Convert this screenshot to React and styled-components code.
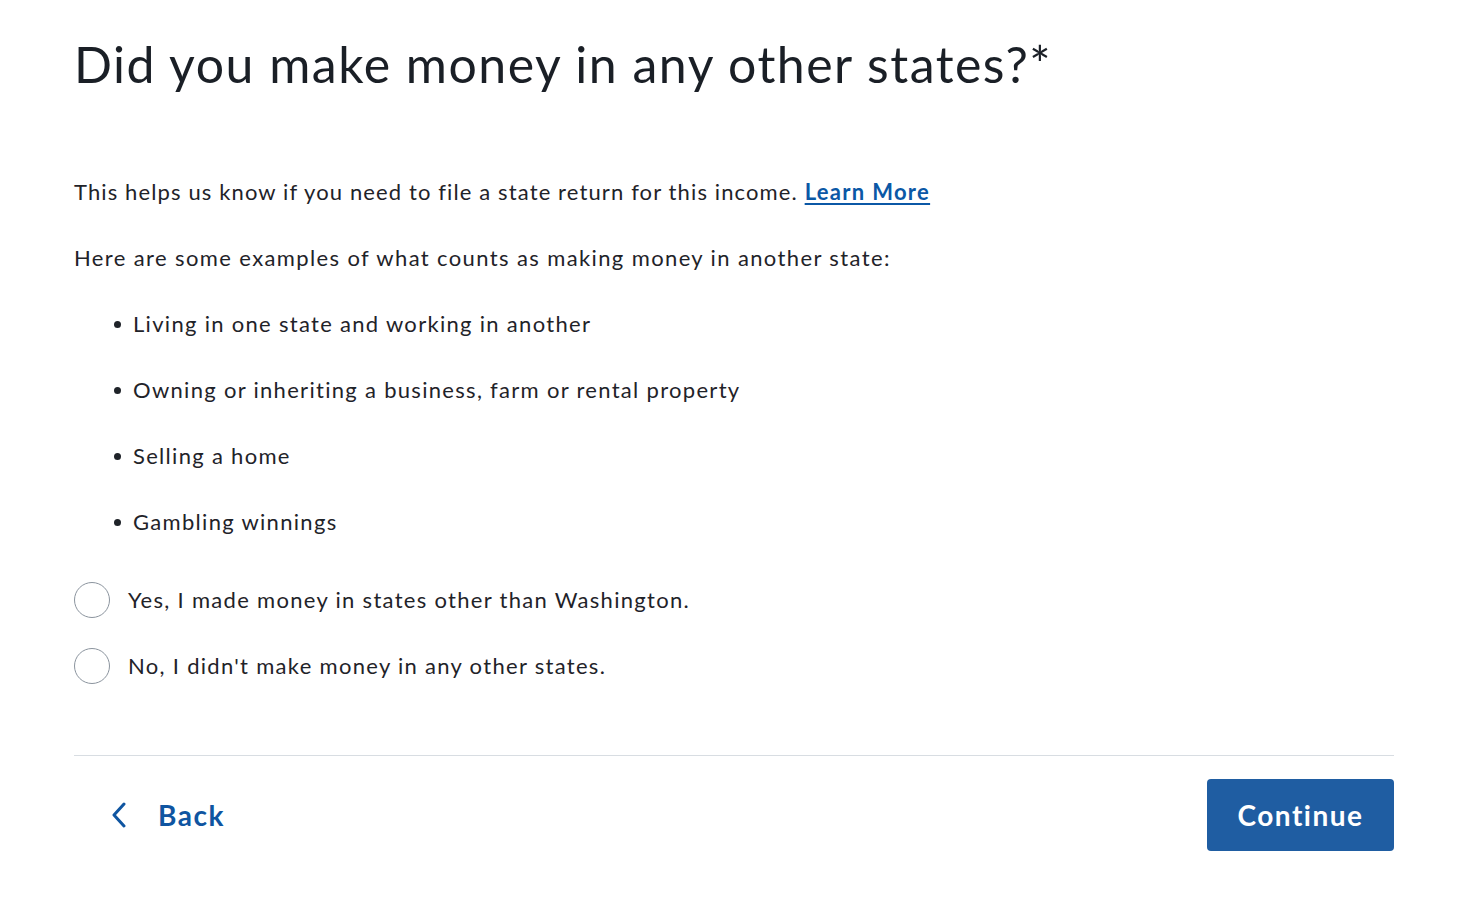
import React from 'react'
import styled, { createGlobalStyle } from 'styled-components'

const GlobalStyle = createGlobalStyle`
  body {
    margin: 0;
    background: #ffffff;
    font-family: 'Lato', 'Liberation Sans', sans-serif;
    color: #1f2329;
  }
`

const Page = styled.main`
  width: 1320px;
  padding: 30px 0 0 74px;
`

const Title = styled.h1`
  margin: 0;
  font-size: 50px;
  font-weight: 400;
  line-height: 68px;
  letter-spacing: 1.5px;
  color: #1a1f26;
`

const Text = styled.p`
  margin: 0;
  font-size: 22px;
  line-height: 32px;
  letter-spacing: ${p => p.$tracking || '1.3px'};
`

const Intro = styled.div`
  display: flex;
  flex-direction: column;
  gap: 34px;
  margin-top: 78px;
`

const List = styled.ul`
  margin: 0;
  padding: 0 0 0 40px;
  list-style: none;
  display: flex;
  flex-direction: column;
  gap: 34px;
`

const Item = styled.li`
  display: flex;
  align-items: center;
  font-size: 22px;
  line-height: 32px;
  letter-spacing: 1.3px;
  &::before {
    content: '';
    width: 7px;
    height: 7px;
    border-radius: 50%;
    background: #1f2329;
    margin-right: 12px;
    flex: none;
  }
`

const LearnMore = styled.a`
  color: #0b58a6;
  font-weight: 700;
  letter-spacing: 1.3px;
  text-decoration: underline;
  text-underline-offset: 3px;
`

const Options = styled.div`
  display: flex;
  flex-direction: column;
  gap: 30px;
  margin-top: 44px;
`

const Option = styled.label`
  display: flex;
  align-items: center;
  gap: 18px;
  font-size: 22px;
  letter-spacing: 1.3px;
  line-height: 36px;
  cursor: pointer;
`

const Radio = styled.span`
  width: 34px;
  height: 34px;
  border: 1px solid #8b949e;
  border-radius: 50%;
  background: #fff;
  flex: none;
`

const Footer = styled.div`
  margin-top: 71px;
  border-top: 1px solid #d8dde2;
  padding-top: 23px;
  display: flex;
  justify-content: space-between;
  align-items: center;
`

const BackButton = styled.button`
  display: flex;
  align-items: center;
  gap: 30px;
  border: none;
  background: none;
  padding: 0 0 0 36px;
  color: #0f55a1;
  font-family: inherit;
  font-size: 28px;
  font-weight: 700;
  letter-spacing: 1.5px;
  cursor: pointer;
`

const ContinueButton = styled.button`
  width: 187px;
  height: 72px;
  border: none;
  border-radius: 4px;
  background: #1f5da2;
  color: #fff;
  font-family: inherit;
  font-size: 28px;
  font-weight: 700;
  letter-spacing: 1.5px;
  cursor: pointer;
`

const examples = [
  'Living in one state and working in another',
  'Owning or inheriting a business, farm or rental property',
  'Selling a home',
  'Gambling winnings',
]

export default function App () {
  return (
    <>
      <GlobalStyle />
      <Page>
        <Title>Did you make money in any other states?*</Title>
        <Intro>
          <Text $tracking="1.12px">
            This helps us know if you need to file a state return for this income.{' '}
            <LearnMore href="#">Learn More</LearnMore>
          </Text>
          <Text $tracking="1.38px">Here are some examples of what counts as making money in another state:</Text>
          <List>
            {examples.map(e => <Item key={e}>{e}</Item>)}
          </List>
        </Intro>
        <Options>
          <Option><Radio />Yes, I made money in states other than Washington.</Option>
          <Option><Radio />No, I didn't make money in any other states.</Option>
        </Options>
        <Footer>
          <BackButton>
            <svg width="18" height="26" viewBox="0 0 18 26" fill="none">
              <path d="M14 2 L4 13 L14 24" stroke="#0f55a1" strokeWidth="3" strokeLinecap="round" strokeLinejoin="round" />
            </svg>
            Back
          </BackButton>
          <ContinueButton>Continue</ContinueButton>
        </Footer>
      </Page>
    </>
  )
}
